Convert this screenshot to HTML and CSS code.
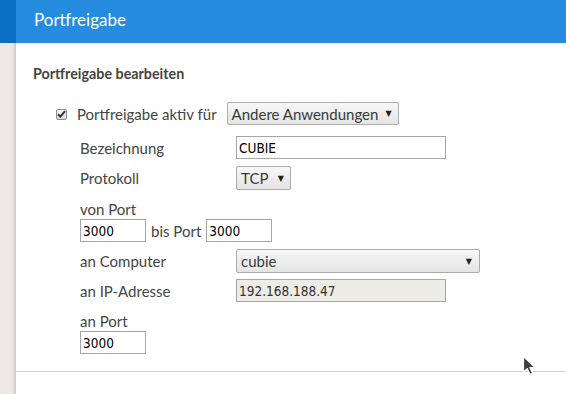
FILE: index.html
```html
<!DOCTYPE html>
<html lang="de">
<head>
<meta charset="utf-8">
<title>Portfreigabe</title>
<link rel="stylesheet" href="styles.css">
</head>
<body>
<div class="page">
  <aside class="side">
    <div class="side-top"></div>
    <div class="side-rest"></div>
  </aside>
  <main class="main">
    <header class="head"><h1 class="head-title">Portfreigabe</h1></header>
    <section class="content">
      <h2 class="sec-title">Portfreigabe bearbeiten</h2>
      <div class="form">
        <div class="row-active">
          <span class="check"><svg width="9" height="8" viewBox="0 0 9 8"><path d="M1 4.2 L3.4 6.6 L8 1.2" fill="none" stroke="#333" stroke-width="2"/></svg></span>
          <span class="lbl active-lbl">Portfreigabe aktiv für</span>
          <span class="sel sel-app"><span class="sel-text">Andere Anwendungen</span><span class="arrow">▼</span></span>
        </div>
        <div class="fields">
          <div class="row r-name"><span class="lbl col-l">Bezeichnung</span><span class="inp inp-name">CUBIE</span></div>
          <div class="row r-proto"><span class="lbl col-l">Protokoll</span><span class="sel sel-proto"><span class="sel-text">TCP</span><span class="arrow">▼</span></span></div>
          <div class="stack r-von">
            <span class="lbl">von Port</span>
            <div class="ports"><span class="inp inp-port">3000</span><span class="lbl bis">bis Port</span><span class="inp inp-port">3000</span></div>
          </div>
          <div class="row r-comp"><span class="lbl col-l">an Computer</span><span class="sel sel-comp"><span class="sel-text">cubie</span><span class="arrow">▼</span></span></div>
          <div class="row r-ip"><span class="lbl col-l">an IP-Adresse</span><span class="inp inp-ip">192.168.188.47</span></div>
          <div class="stack r-anport">
            <span class="lbl">an Port</span>
            <div class="ports"><span class="inp inp-port">3000</span></div>
          </div>
        </div>
      </div>
    </section>
    <hr class="rule">
  </main>
</div>
<svg class="cursor" width="16" height="22" viewBox="0 0 16 22"><path d="M1.5 1.5 L1.5 17 L5.2 13.6 L8 19.5 L10.6 18.3 L7.9 12.6 L12.8 12.4 Z" fill="#3a3f47" stroke="#fff" stroke-width="1.2" stroke-linejoin="round"/></svg>
</body>
</html>
```
FILE: styles.css
```css
html, body {
  margin: 0;
  padding: 0;
  background: #fff;
}
body {
  width: 566px;
  height: 394px;
  overflow: hidden;
  position: relative;
  font-family: Lato, "Open Sans", sans-serif;
}
.page {
  display: flex;
  height: 394px;
}
.side {
  width: 16px;
  flex: none;
  display: flex;
  flex-direction: column;
}
.side-top {
  height: 43px;
  background: #0a6fc3;
}
.side-rest {
  flex: 1;
  background: linear-gradient(to right, #ebe9e3 0, #ebe9e3 12px, #dcdad3 14px, #cbc9c2 16px);
}
.main {
  flex: 1;
  display: flex;
  flex-direction: column;
}
.head {
  height: 43px;
  background: #268ce0;
  display: flex;
  align-items: center;
  padding-left: 18px;
}
.head-title {
  margin: 0;
  font-weight: 400;
  font-size: 17px;
  color: #fff;
  line-height: 20px;
  margin-top: -4px;
}
.content {
  padding-left: 17px;
}
.sec-title {
  margin: 22px 0 0;
  font-size: 14.3px;
  line-height: 18px;
  font-weight: 700;
  color: #444;
}
.form {
  padding-left: 23px;
}
.lbl {
  font-size: 15px;
  color: #444;
  line-height: 20px;
  white-space: nowrap;
}
.row-active {
  margin-top: 19px;
  display: flex;
  align-items: center;
  height: 23px;
}
.check {
  width: 9px;
  height: 9px;
  border: 1px solid #8c8c8c;
  border-radius: 2px;
  background: linear-gradient(#f6f6f6, #dcdcdc);
  display: flex;
  align-items: center;
  justify-content: center;
  margin-right: 10px;
  margin-top: 1px;
}
.active-lbl {
  margin-right: 10px;
}
.sel {
  display: inline-flex;
  align-items: center;
  justify-content: space-between;
  box-sizing: border-box;
  height: 23px;
  border: 1px solid #ababab;
  border-radius: 2px;
  background: linear-gradient(#f7f7f7, #e4e4e4);
  padding: 0 6px 0 4px;
  font-size: 15px;
  color: #3a3a3a;
  white-space: nowrap;
}
.sel-text {
  line-height: 20px;
}
.arrow {
  font-size: 8px;
  color: #222;
  font-family: "DejaVu Sans", sans-serif;
  margin-left: 6px;
}
.sel-app { width: 172px; }
.sel-proto { width: 55px; height: 24px; }
.sel-comp { width: 244px; height: 24px; padding-right: 7px; }
.fields {
  padding-left: 24px;
  display: flex;
  flex-direction: column;
}
.row {
  display: flex;
  align-items: center;
}
.col-l {
  width: 156px;
  flex: none;
}
.inp {
  box-sizing: border-box;
  display: inline-flex;
  align-items: center;
  height: 23px;
  border: 1px solid #a6a6a6;
  padding-left: 2px;
  font-family: "DejaVu Sans Condensed", "DejaVu Sans", sans-serif;
  font-size: 13.5px;
  color: #000;
  background: #fff;
}
.inp-name { width: 210px; }
.inp-ip { width: 210px; background: #edece6; color: #333; }
.inp-port { width: 66px; }
.r-name { margin-top: 11px; }
.r-proto { margin-top: 7px; }
.r-von { margin-top: 9px; }
.r-comp { margin-top: 7px; }
.r-ip { margin-top: 6px; }
.r-anport { margin-top: 9px; }
.stack {
  display: flex;
  flex-direction: column;
}
.ports {
  display: flex;
  align-items: center;
}
.bis {
  margin: 0 5px 0 5px;
}
.rule {
  margin: 17px 0 0;
  border: 0;
  border-top: 1px solid #d2d2d2;
  height: 0;
}
.cursor {
  position: absolute;
  left: 522px;
  top: 355px;
}
```
